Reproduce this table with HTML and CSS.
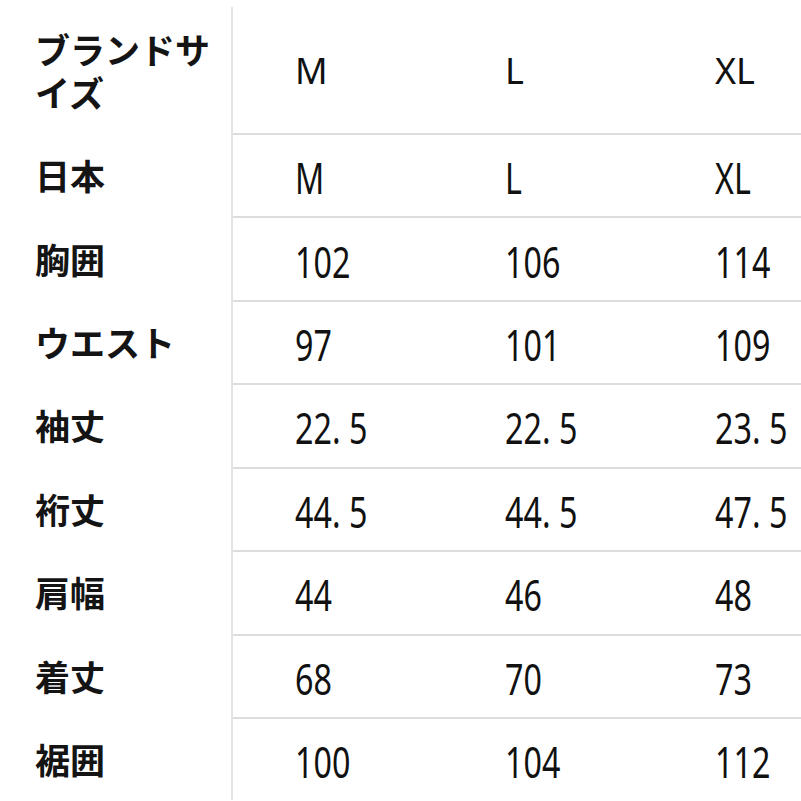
FILE: index.html
```html
<!DOCTYPE html>
<html lang="ja">
<head>
<meta charset="utf-8">
<title>サイズ表</title>
<link rel="stylesheet" href="styles.css">
</head>
<body>
<div class="table">
  <div class="row head">
    <div class="label">ブランドサイズ</div>
    <div class="cell"><span class="hv">M</span></div>
    <div class="cell"><span class="hv">L</span></div>
    <div class="cell"><span class="hv">XL</span></div>
  </div>
  <div class="row">
    <div class="label">日本</div>
    <div class="cell"><span class="v">M</span></div>
    <div class="cell"><span class="v">L</span></div>
    <div class="cell"><span class="v">XL</span></div>
  </div>
  <div class="row">
    <div class="label">胸囲</div>
    <div class="cell"><span class="v">102</span></div>
    <div class="cell"><span class="v">106</span></div>
    <div class="cell"><span class="v">114</span></div>
  </div>
  <div class="row">
    <div class="label">ウエスト</div>
    <div class="cell"><span class="v">97</span></div>
    <div class="cell"><span class="v">101</span></div>
    <div class="cell"><span class="v">109</span></div>
  </div>
  <div class="row">
    <div class="label">袖丈</div>
    <div class="cell"><span class="v">22. 5</span></div>
    <div class="cell"><span class="v">22. 5</span></div>
    <div class="cell"><span class="v">23. 5</span></div>
  </div>
  <div class="row">
    <div class="label">裄丈</div>
    <div class="cell"><span class="v">44. 5</span></div>
    <div class="cell"><span class="v">44. 5</span></div>
    <div class="cell"><span class="v">47. 5</span></div>
  </div>
  <div class="row">
    <div class="label">肩幅</div>
    <div class="cell"><span class="v">44</span></div>
    <div class="cell"><span class="v">46</span></div>
    <div class="cell"><span class="v">48</span></div>
  </div>
  <div class="row">
    <div class="label">着丈</div>
    <div class="cell"><span class="v">68</span></div>
    <div class="cell"><span class="v">70</span></div>
    <div class="cell"><span class="v">73</span></div>
  </div>
  <div class="row">
    <div class="label">裾囲</div>
    <div class="cell"><span class="v">100</span></div>
    <div class="cell"><span class="v">104</span></div>
    <div class="cell"><span class="v">112</span></div>
  </div>
</div>
</body>
</html>
```
FILE: styles.css
```css
html, body {
  margin: 0;
  padding: 0;
  background: #ffffff;
  overflow: hidden;
}
body {
  width: 801px;
  height: 801px;
  color: #111111;
  font-family: "Noto Sans", "Noto Sans CJK JP", sans-serif;
}
.table {
  padding-top: 7px;
  width: 801px;
}
.row {
  display: grid;
  grid-template-columns: 233px 210px 210px 148px;
  height: 83.43px;
}
.row.head {
  height: 126px;
}
.label {
  box-sizing: border-box;
  border-right: 2px solid #e3e3e3;
  padding-left: 35px;
  padding-right: 8px;
  display: flex;
  align-items: center;
  font-family: "Noto Sans CJK JP", sans-serif;
  font-weight: 700;
  font-size: 35px;
  line-height: 43px;
  color: #141414;
}
.cell {
  box-sizing: border-box;
  border-top: 2px solid #dddddd;
  padding-left: 62px;
  display: flex;
  align-items: center;
}
.head .cell {
  border-top: none;
}
.hv {
  font-family: "Noto Sans", sans-serif;
  font-size: 36px;
  font-weight: 400;
  line-height: 1;
  padding-top: 2px;
}
.v {
  display: inline-block;
  font-family: "Noto Sans", sans-serif;
  font-size: 43px;
  line-height: 1;
  transform: scaleX(0.75);
  transform-origin: left center;
  white-space: pre;
  padding-top: 4px;
}
```
